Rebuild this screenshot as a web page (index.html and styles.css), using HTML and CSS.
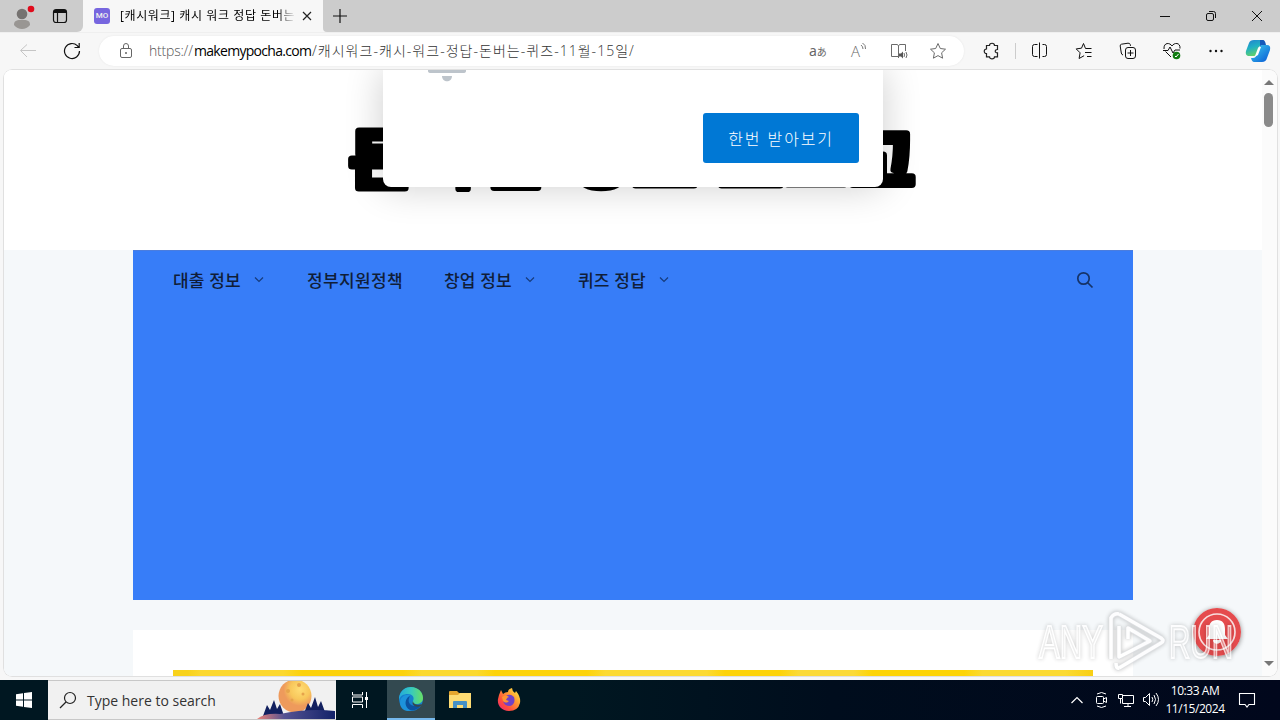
FILE: index.html
```html
<!DOCTYPE html>
<html lang="ko">
<head>
<meta charset="utf-8">
<title>[캐시워크] 캐시 워크 정답 돈버는 퀴즈</title>
<link rel="stylesheet" href="styles.css">
</head>
<body>
<div class="screen">
  <header class="tabstrip">
    <div class="tab-tools">
      <svg class="avatar" width="24" height="28" viewBox="0 0 24 28"><circle cx="10" cy="12" r="5.3" fill="#767371"/><path d="M2 23c0-5 3.5-5 8-5s8 0 8 5c-2 2.700-5 4-8 4s-6-1.300-8-4z" fill="#999693"/><circle cx="19" cy="7" r="3.300" fill="#e00b1c"/></svg>
      <svg class="workspace" width="16" height="16" viewBox="0 0 16 16" fill="none" stroke="#111"><rect x="1.500" y="1.500" width="13" height="13" rx="2.500" stroke-width="1.200"/><path d="M2 3.500h12" stroke-width="3"/><path d="M5.500 4v10" stroke-width="1.200"/></svg>
    </div>
    <div class="tab">
      <span class="favicon">MO</span>
      <span class="tab-title">[캐시워크] 캐시 워크 정답 돈버는</span>
      <svg width="12" height="12" viewBox="0 0 12 12" stroke="#222" stroke-width="1.200"><path d="M2 2l8 8M10 2l-8 8"/></svg>
    </div>
    <svg class="newtab" width="16" height="16" viewBox="0 0 16 16" stroke="#111" stroke-width="1.200"><path d="M1 8h14M8 1v14"/></svg>
    <div class="window-buttons">
      <svg width="12" height="12" viewBox="0 0 12 12" stroke="#111"><path d="M1 6.500h10"/></svg>
      <svg width="12" height="12" viewBox="0 0 12 12" stroke="#111" fill="none"><rect x="1.500" y="3.500" width="7" height="7" rx="1.500"/><path d="M4 1.500h4.500a2 2 0 0 1 2 2V8"/></svg>
      <svg width="12" height="12" viewBox="0 0 12 12" stroke="#111"><path d="M1 1l10 10M11 1L1 11"/></svg>
    </div>
  </header>

  <div class="toolbar">
    <svg class="back" width="18" height="16" viewBox="0 0 18 16" fill="none" stroke="#c5c5c5"><path d="M17 7.500H2M8 1.500l-6.500 6L8 14"/></svg>
    <svg class="reload" width="18" height="18" viewBox="0 0 18 18" fill="none" stroke="#111" stroke-width="1.200"><path d="M16.500 9a7.500 7.500 0 1 1-2.200-5.300l1.200 1.500M16.200 1v4.500H11.500"/></svg>
    <div class="address">
      <svg class="lock" width="14" height="18" viewBox="0 0 14 18" fill="none" stroke="#666"><rect x="1.500" y="6.500" width="11" height="9" rx="1.500"/><path d="M4.500 6V4a2.500 2.500 0 0 1 5 0v2"/><circle cx="7" cy="11" r=".6" fill="#666"/></svg>
      <span class="url"><span class="scheme">https://</span><span class="host">makemypocha.com</span><span class="path">/캐시워크-캐시-워크-정답-돈버는-퀴즈-11월-15일/</span></span>
      <div class="address-actions">
        <span class="translate">a<small>あ</small></span>
        <span class="read">A<svg width="7" height="10" viewBox="0 0 7 10" fill="none" stroke="#777"><path d="M1 3q2 1.500 2 4M2.500 1q3.500 2 3 6"/></svg></span>
        <svg width="20" height="18" viewBox="0 0 20 18" fill="none" stroke="#6b6b6b"><path d="M9.500 16v-1.500h-7v-12h6L9.500 4l1-1.500h6V9M9.500 4v11"/><path d="M10 11.500h2l2-2v7l-2-2h-2z" fill="#555" stroke="none"/><path d="M15 11q1 2 0 4M17 10q2 3 0 6"/></svg>
        <svg width="18" height="18" viewBox="0 0 18 18" fill="none" stroke="#6b6b6b"><path d="M9 1.500l2.300 5 5.200.7-3.900 3.600 1 5.400L9 13.600l-4.600 2.600 1-5.400L1.500 7.200l5.200-.7z"/></svg>
      </div>
    </div>
    <div class="extensions">
      <svg width="18" height="18" viewBox="0 0 18 18" fill="none" stroke="#222" stroke-width="1.200"><path d="M3.500 3.500h3c0-3 5-3 5 0h3v4c-3-.2-3 3.500 0 3.300v4h-3c0 2.800-5 2.800-5 0h-3v-3.300c-3 0-3-4.500 0-4.500z"/></svg>
      <i class="divider"></i>
      <svg width="18" height="18" viewBox="0 0 18 18" fill="none" stroke="#111"><path d="M6.500 2.500h-3a2 2 0 0 0-2 2v8a2 2 0 0 0 2 2h3M11.500 2.500h2a2 2 0 0 1 2 2v8a2 2 0 0 1-2 2h-2M8.500 .5v16"/></svg>
      <svg width="18" height="18" viewBox="0 0 18 18" fill="none" stroke="#111"><path d="M16.500 6.500h-6L8.500 1.500l-2 4.700-5.300.7 3.900 3.900-1 5.700 5-2.800M10 10.500h6.500M12 14.500h4.500"/></svg>
      <svg width="18" height="18" viewBox="0 0 18 18" fill="none" stroke="#111"><path d="M4 13Q2.500 12.500 2.300 11L1.200 4Q1 2.500 2.500 2.200L9 1.200q2-.2 2.300 1.500l.2 1.200"/><rect x="6.500" y="5.500" width="10" height="11" rx="2.500"/><path d="M11.500 8v6M8.500 11h6"/></svg>
      <svg width="18" height="18" viewBox="0 0 18 18" fill="none" stroke="#111"><path d="M1 7C.5 0 7 .5 9 4c2-3.500 8.500-4 8 2.500M2.500 9.500L8 15M0 8.500h5L7 5l3 6 2-3h5"/><circle cx="13.500" cy="13.500" r="3.800" fill="#107c10" stroke="none"/><path d="M12 14l1 1 2.500-3" stroke="white"/></svg>
      <svg width="18" height="18" viewBox="0 0 18 18" fill="#111"><circle cx="3.500" cy="9" r="1.200"/><circle cx="9" cy="9" r="1.200"/><circle cx="14.500" cy="9" r="1.200"/></svg>
    </div>
    <svg class="copilot" width="26" height="26" viewBox="0 0 26 26"><defs><linearGradient id="ca" x2=".4" y2="1"><stop stop-color="#2380cf"/><stop offset=".5" stop-color="#1fb0c4"/><stop offset="1" stop-color="#63d267"/></linearGradient><linearGradient id="cb" x2="1" y2="1"><stop stop-color="#3ed0ee"/><stop offset="1" stop-color="#0857d5"/></linearGradient></defs><path d="M9 2h8q2 0 3 4h-2q-3 0-4 4l-2 6q-1 2-3 2H3q-3-1-2-5l3-8q1-3 5-3z" fill="url(#ca)"/><path d="M15 2h3q2 0 3 5h-3q-2 0-3 3z" fill="#1559ba"/><path d="M17 24H9q-2 0-3-4h2q3 0 4-4l2-6q1-3 3-3h5q4 0 3 5l-3 8q-1 4-5 4z" fill="url(#cb)"/><path d="M16 9l-3 8q-1 1-3 1l3-8q1-2 3-1z" fill="white"/></svg>
  </div>

  <main class="viewport">
    <div class="page">
      <div class="site-header">
        <svg class="logo" width="580" height="80" viewBox="0 0 580 80">
          <g font-size="64">
            <text transform="translate(3 60) scale(1.1 1.02)">돈</text>
            <text transform="translate(69 60) scale(1 .96)">버</text><text transform="translate(139 60) scale(1.04 .96)">는</text>
            <text transform="translate(223 59) scale(1 .96)">정</text><text transform="translate(287 63) scale(1.08 1)">보</text>
            <text transform="translate(373 63) scale(1.08 1)">모</text><text transform="translate(439 62) scale(1.05 1)">으</text>
            <text transform="translate(504 63) scale(1.1 1.06)">고</text>
          </g>
        </svg>
      </div>
      <div class="content">
        <section class="masthead">
          <nav class="menu">
            <a class="m1">대출 정보</a><svg class="chev" width="10" height="6" viewBox="0 0 10 6"><path d="M1 .5l4 4 4-4"/></svg>
            <a class="m2">정부지원정책</a>
            <a class="m3">창업 정보</a><svg class="chev" width="10" height="6" viewBox="0 0 10 6"><path d="M1 .5l4 4 4-4"/></svg>
            <a class="m4">퀴즈 정답</a><svg class="chev" width="10" height="6" viewBox="0 0 10 6"><path d="M1 .5l4 4 4-4"/></svg>
            <svg class="find" width="18" height="18" viewBox="0 0 18 18" fill="none" stroke="#163367" stroke-width="1.700"><circle cx="7.500" cy="7.500" r="5.700"/><path d="M11.500 11.500l5 5"/></svg>
          </nav>
        </section>
        <article class="post"><div class="banner"></div></article>
      </div>
    </div>
    <div class="scrollbar"><i class="up"></i><i class="thumb"></i><i class="down"></i></div>
    <div class="dialog">
      <svg class="dialog-bell" width="38" height="12" viewBox="0 0 38 12" fill="#bdc4cb"><path d="M0 0h38v1q0 2-3 2H3Q0 3 0 1z"/><path d="M14 6h10c0 7-10 7-10 0z"/></svg>
      <button class="accept">한번 받아보기</button>
    </div>
    <div class="bell">
      <svg width="48" height="48" viewBox="0 0 48 48"><circle cx="24" cy="24" r="24" fill="#e54b4d"/><circle cx="24" cy="24" r="18" fill="none" stroke="#f8dede" stroke-width="1.700"/><path d="M24 12c-6 0-8 4-8 9v6l-3 4h22l-3-4v-6c0-5-2-9-8-9zM20 32c0 5 8 5 8 0z" fill="white"/></svg>
    </div>
    <div class="watermark">
      <svg width="204" height="66" viewBox="0 0 204 66">
        <g class="mark-text"><text x="4" y="49" textLength="64" lengthAdjust="spacingAndGlyphs">ANY</text><text x="134" y="49" textLength="64" lengthAdjust="spacingAndGlyphs">RUN</text></g>
        <path class="mark-edge" d="M84 5l42 24q4 3 0 5L84 59M84 17v31l31-16L93 19v11M76 8v42M84 5q-5-1-8 4M84 59q-3 1-3-5"/>
        <path class="mark-core" d="M84 5l42 24q4 3 0 5L84 59M84 17v31l31-16L93 19v11M76 8v42M84 5q-5-1-8 4M84 59q-3 1-3-5"/>
      </svg>
    </div>
  </main>

  <footer class="taskbar">
    <div class="start"><svg width="16" height="16" viewBox="0 0 16 16" fill="white"><path d="M0 2.200l7-1v6.300H0zM8 1l8-1v7.500H8zM0 8.500h7v6.300l-7-1zM8 8.500h8V16l-8-1z"/></svg></div>
    <div class="search">
      <svg width="18" height="18" viewBox="0 0 18 18" fill="none" stroke="#222" stroke-width="1.200"><circle cx="11" cy="7" r="5.500"/><path d="M7 11l-6 6"/></svg>
      <span>Type here to search</span>
      <svg class="moon" width="80" height="40" viewBox="0 0 80 40"><defs><radialGradient id="mo" cx=".65" cy=".3"><stop stop-color="#ffdd75"/><stop offset=".6" stop-color="#f8c75b"/><stop offset="1" stop-color="#ee9a5c"/></radialGradient><linearGradient id="hill"><stop stop-color="#ed8276"/><stop offset=".35" stop-color="#555393"/><stop offset="1" stop-color="#132269"/></linearGradient></defs><circle cx="39" cy="17" r="16.500" fill="url(#mo)"/><g fill="#e6a34b"><circle cx="32" cy="12" r="2"/><circle cx="43" cy="6" r="2"/><circle cx="36" cy="21" r="1.500"/><circle cx="47" cy="15" r="1.500"/></g><path d="M7 37l4-11 3 5 4-10 3 9 3-5 4 12zM48 34l4-10 3 5 4-11 3 10 3-6 4 11 3 6z" fill="#12205f"/><path d="M1 40q7-6 23-5 28-6 55-3v8z" fill="url(#hill)"/></svg>
    </div>
    <div class="pins">
      <div class="pin"><svg width="18" height="18" viewBox="0 0 18 18" fill="none" stroke="white"><path d="M1.500 1v3h10V1M1.500 17v-3.500h10V17M1.500 6h10v5h-10zM15.500 1v16"/><path d="M14 6h3v3h-3z" fill="white" stroke="none"/></svg></div>
      <div class="pin active"><svg width="24" height="24" viewBox="0 0 24 24"><defs><linearGradient id="ed"><stop stop-color="#22a8dc"/><stop offset=".5" stop-color="#37c9bf"/><stop offset="1" stop-color="#69df63"/></linearGradient></defs><circle cx="12" cy="12" r="12" fill="#157fce"/><path d="M0 11C1 3 7 0 12 0c7 0 12 5 12 11 0 4-3 6-7 6-3 0-4-1-3-3 2-4-1-7-5-7-5 0-8 2-9 6z" fill="url(#ed)"/><path d="M9 10c-4 4-1 11 4 13-7 3-12-2-12-7 0-6 5-9 10-8z" fill="#1d93dc"/><path d="M11 9c-4 7 1 12 11 9-3 5-8 6-11 5-6-3-6-11 0-14z" fill="#0c529f"/><path d="M14 14c0 3 5 5 9 3l-1 2c-5 2-10-1-8-5z" fill="#37474c"/></svg></div>
      <div class="pin"><svg width="22" height="20" viewBox="0 0 22 20"><path d="M0 2q0-1 1-1h7l2 2h12v5H0z" fill="#e5a62e"/><path d="M0 5h9l2-2h11v15H0z" fill="#fddb73"/><path d="M4 18v-6q0-1 1-1h12q1 0 1 1v6h-4v-3H8v3z" fill="#4590c5"/></svg></div>
      <div class="pin"><svg width="24" height="24" viewBox="0 0 24 24"><defs><linearGradient id="fx" x1="1" x2="0" y2="1"><stop stop-color="#fff84a"/><stop offset=".35" stop-color="#ffa332"/><stop offset=".7" stop-color="#ff4d3c"/><stop offset="1" stop-color="#e72381"/></linearGradient></defs><path d="M2 7l2-5 2 4q2-2 5-2Q11 1 15 0q0 3 3 5l1-2q5 6 4 12-2 8-11 8C4 23 0 17 1 11z" fill="url(#fx)"/><path d="M9 8q4-3 8 1 2 7-4 9-6 0-7-5 2 2 5 1-4-2-2-6z" fill="#7142c6"/><path d="M5 9q4-3 7 0-2 0-3 3l3 1q-3 3-6 0z" fill="#ff9631"/></svg></div>
    </div>
    <div class="tray">
      <svg class="expand" width="14" height="18" viewBox="0 0 14 18" fill="none" stroke="white" stroke-width="1.200"><path d="M1.500 12L7 6.500l5.500 5.500"/></svg>
      <svg width="16" height="18" viewBox="0 0 16 18" fill="none" stroke="white"><rect x="2.500" y="5.500" width="7" height="7" rx="1"/><path d="M9.500 8l3-1.500v5l-3-1.500M3 3q4.500-3 9 0M3 15q4.500 3 9 0"/></svg>
      <svg width="18" height="18" viewBox="0 0 18 18" fill="none" stroke="white"><path d="M6 4.500h10.500v8H5.500V8M11 12.500V15M7 15.500h7M1.500 3.500h4v4h-4zM3.500 7.500v5"/></svg>
      <svg width="18" height="18" viewBox="0 0 18 18" fill="none" stroke="white"><path d="M1.500 6.500h2l4-4v12l-4-4h-2zM10 6q1.500 2.500 0 5M12 4q3 4.500 0 9M14 2q5 6.500 0 13"/></svg>
      <div class="clock"><div class="time">10:33 AM</div><div class="date">11/15/2024</div></div>
      <svg class="note" width="18" height="18" viewBox="0 0 18 18" fill="none" stroke="white" stroke-width="1.100"><path d="M1.500 2.500h15v11H11L9 16l-2-2.500H1.500z"/></svg>
    </div>
  </footer>
</div>
</body>
</html>
```
FILE: styles.css
```css
* { box-sizing: border-box; }
body { margin: 0; font-family: "Open Sans", "Noto Sans CJK KR", sans-serif; overflow: hidden; }
svg { display: block; flex: none; }
.screen { width: 1280px; height: 720px; display: flex; flex-direction: column; background: #f7f7f7; }

.tabstrip { height: 32px; display: flex; align-items: center; background: #f7f7f7; flex: none; }
.tab-tools { width: 83px; height: 32px; display: flex; align-items: center; gap: 16px; padding-left: 12px; background: #ccc; border-radius: 0 0 6px 0; }
.tab { width: 240px; height: 32px; display: flex; align-items: center; padding-left: 11px; background: #f7f7f7; }
.favicon { width: 16px; height: 16px; border-radius: 3px; background: #7766df; color: #eee; font: 500 8px/16px Roboto, sans-serif; text-align: center; margin-right: 10px; }
.tab-title { width: 174px; margin-right: 7px; white-space: nowrap; overflow: hidden; font-size: 12px; line-height: 20px; letter-spacing: .6px; color: #000; -webkit-mask-image: linear-gradient(90deg, #000 158px, transparent 176px); }
.newtab { box-sizing: content-box; padding: 8px 932px 8px 9px; margin-right: -932px; background: #ccc; border-bottom-left-radius: 4px; }
.window-buttons { flex: 1; height: 32px; display: flex; justify-content: flex-end; align-items: center; gap: 34px; padding-right: 17px; z-index: 1; }

.toolbar { height: 38px; display: flex; align-items: center; padding: 0 8px 2px 19px; flex: none; border-top: 1px solid #efefef; }
.reload { margin: 0 27px 0 26px; }
.address { width: 865px; margin-left: -9px; height: 30px; margin-top: 1px; border-radius: 15px; display: flex; align-items: center; background: #fff; padding: 0 17px 0 20px; box-shadow: 0 0 2px #e4e4e4; }
.url { flex: 1; display: flex; margin-left: 16px; font-size: 14px; line-height: 22px; font-weight: 300; white-space: nowrap; color: #333; }
.scheme { width: 45px; letter-spacing: -.2px; color: #555; }
.host { width: 118px; font-weight: 400; letter-spacing: -.7px; color: #000; }
.path { width: 325px; letter-spacing: 1.030px; }
.address-actions { display: flex; align-items: center; gap: 20px; color: #666; }
.translate { width: 20px; font: 14px/20px "Noto Sans", "Noto Sans CJK JP", sans-serif; margin-right: 2px; white-space: nowrap; }
.translate small { font-size: 10px; }
.read { width: 18px; display: flex; align-items: flex-start; font-size: 15px; line-height: 18px; font-weight: 300; }
.extensions { display: flex; align-items: center; gap: 26px; margin-left: 19px; }
.divider { width: 1px; height: 16px; background: #ccc; margin: 0 -11px 0 -12px; }
.copilot { margin-left: 20px; }

.viewport { position: relative; width: 1273px; height: 606px; margin-left: 4px; display: flex; flex: none; overflow: hidden; border-radius: 8px; background: #fff; box-shadow: 0 0 1px 1px #ddd; clip-path: inset(-1px round 9px); }
.page { width: 1258px; flex: none; background: #f5f8fa; }
.site-header { height: 180px; background: #fff; padding: 53px 0 0 342px; }
.logo { overflow: visible; font-family: "Noto Sans CJK KR", sans-serif; font-weight: 700; fill: #000; stroke: #000; stroke-width: 7px; stroke-linejoin: round; }
.content { width: 1000px; margin: 0 auto; }
.masthead { height: 350px; background: #377df8; border-top: 1px solid #4b7dde; }
.menu { height: 58px; display: flex; align-items: center; padding: 0 39px 0 40px; font: 500 17px/24px "Noto Sans CJK KR", sans-serif; color: #101d38; white-space: nowrap; }
.menu a { letter-spacing: .1px; }
.menu .m2 { letter-spacing: .35px; }
.m1, .m3, .m4 { width: 81px; }
.m2 { width: 96px; margin: 0 41px 0 43px; }
.m4 { margin-left: 43px; }
.chev { fill: none; stroke: #163b7c; stroke-width: 1.200; }
.find { margin-left: auto; }
.post { margin-top: 30px; height: 60px; background: #fff; padding: 40px 40px 0; }
.banner { height: 10px; background: linear-gradient(90deg, #f8d21b 0 1.600%, #fcd82f 3% 12%, #fcd20c 14% 25%, #fbd92f 27% 33%, #fdd309 35% 45%, #fcda32 47% 58%, #fdd308 60% 66%, #fbda37 68% 74%, #fdd405 76% 86%, #fbda32 88% 97%, #f8cf13); }
.scrollbar { width: 15px; display: flex; flex-direction: column; align-items: center; background: #fbfbfb; padding: 10px 2px 10px 0; }
.up { border: 5px solid transparent; border-top: 0; border-bottom: 5px solid #777; }
.thumb { width: 9px; height: 34px; background: #8a8a8a; border-radius: 5px; margin-top: 8px; }
.down { border: 5px solid transparent; border-bottom: 0; border-top: 5px solid #777; margin-top: auto; }

.dialog { position: absolute; left: 379px; top: 0; width: 500px; height: 117px; background: #fff; border-radius: 0 0 8px 8px; box-shadow: 0 0 38px rgba(0,0,0,.2); padding: 0 24px 24px 45px; display: flex; justify-content: space-between; align-items: flex-end; }
.dialog-bell { align-self: flex-start; }
.accept { width: 156px; height: 50px; padding: 0 0 1px; border: 0; border-radius: 3px; background: #0078d5; color: #fff; font: 300 16px/24px "Noto Sans CJK KR", sans-serif; letter-spacing: 1.800px; }
.bell { position: absolute; left: 1189px; top: 538px; border-radius: 50%; box-shadow: 0 1px 5px #888; }
.watermark { position: absolute; left: 1031px; top: 539px; filter: drop-shadow(0 0 2px rgba(0,0,0,.3)); opacity: .75; }
.mark-text { font-family: "Liberation Sans", sans-serif; font-size: 47px; fill: rgba(255,255,255,.5); stroke: #fff; stroke-width: 1.800px; }
.mark-edge, .mark-core { fill: none; stroke-linejoin: round; }
.mark-edge { stroke: #d5d7da; stroke-width: 5; }
.mark-core { stroke: #fff; stroke-width: 3.500; }

.taskbar { height: 40px; margin-top: auto; display: flex; background: linear-gradient(90deg, #001721 0 45%, #000d1d 65%, #01071c); color: #fff; flex: none; }
.start { width: 48px; display: grid; place-items: center; }
.search { width: 288px; display: flex; align-items: center; background: #f1f1f1; border: 1px solid #c8c8c8; border-width: 1px 0; padding-left: 11px; gap: 10px; font-size: 14px; color: #333; overflow: hidden; }
.search span { width: 160px; white-space: nowrap; letter-spacing: 0; }
.moon { margin-top: -2px; }
.pins { display: flex; gap: 1px; }
.pin { width: 48px; display: grid; place-items: center; }
.active { margin-left: 2px; background: #334950; border-bottom: 2px solid #76b9ed; }
.tray { margin-left: auto; display: flex; align-items: center; padding-right: 24px; gap: 7px; }
.expand { margin-right: 3px; }
.clock { width: 62px; margin-left: -3px; font-size: 12px; line-height: 18px; text-align: center; letter-spacing: -.45px; white-space: nowrap; }
.note { margin-left: 5px; }
```
